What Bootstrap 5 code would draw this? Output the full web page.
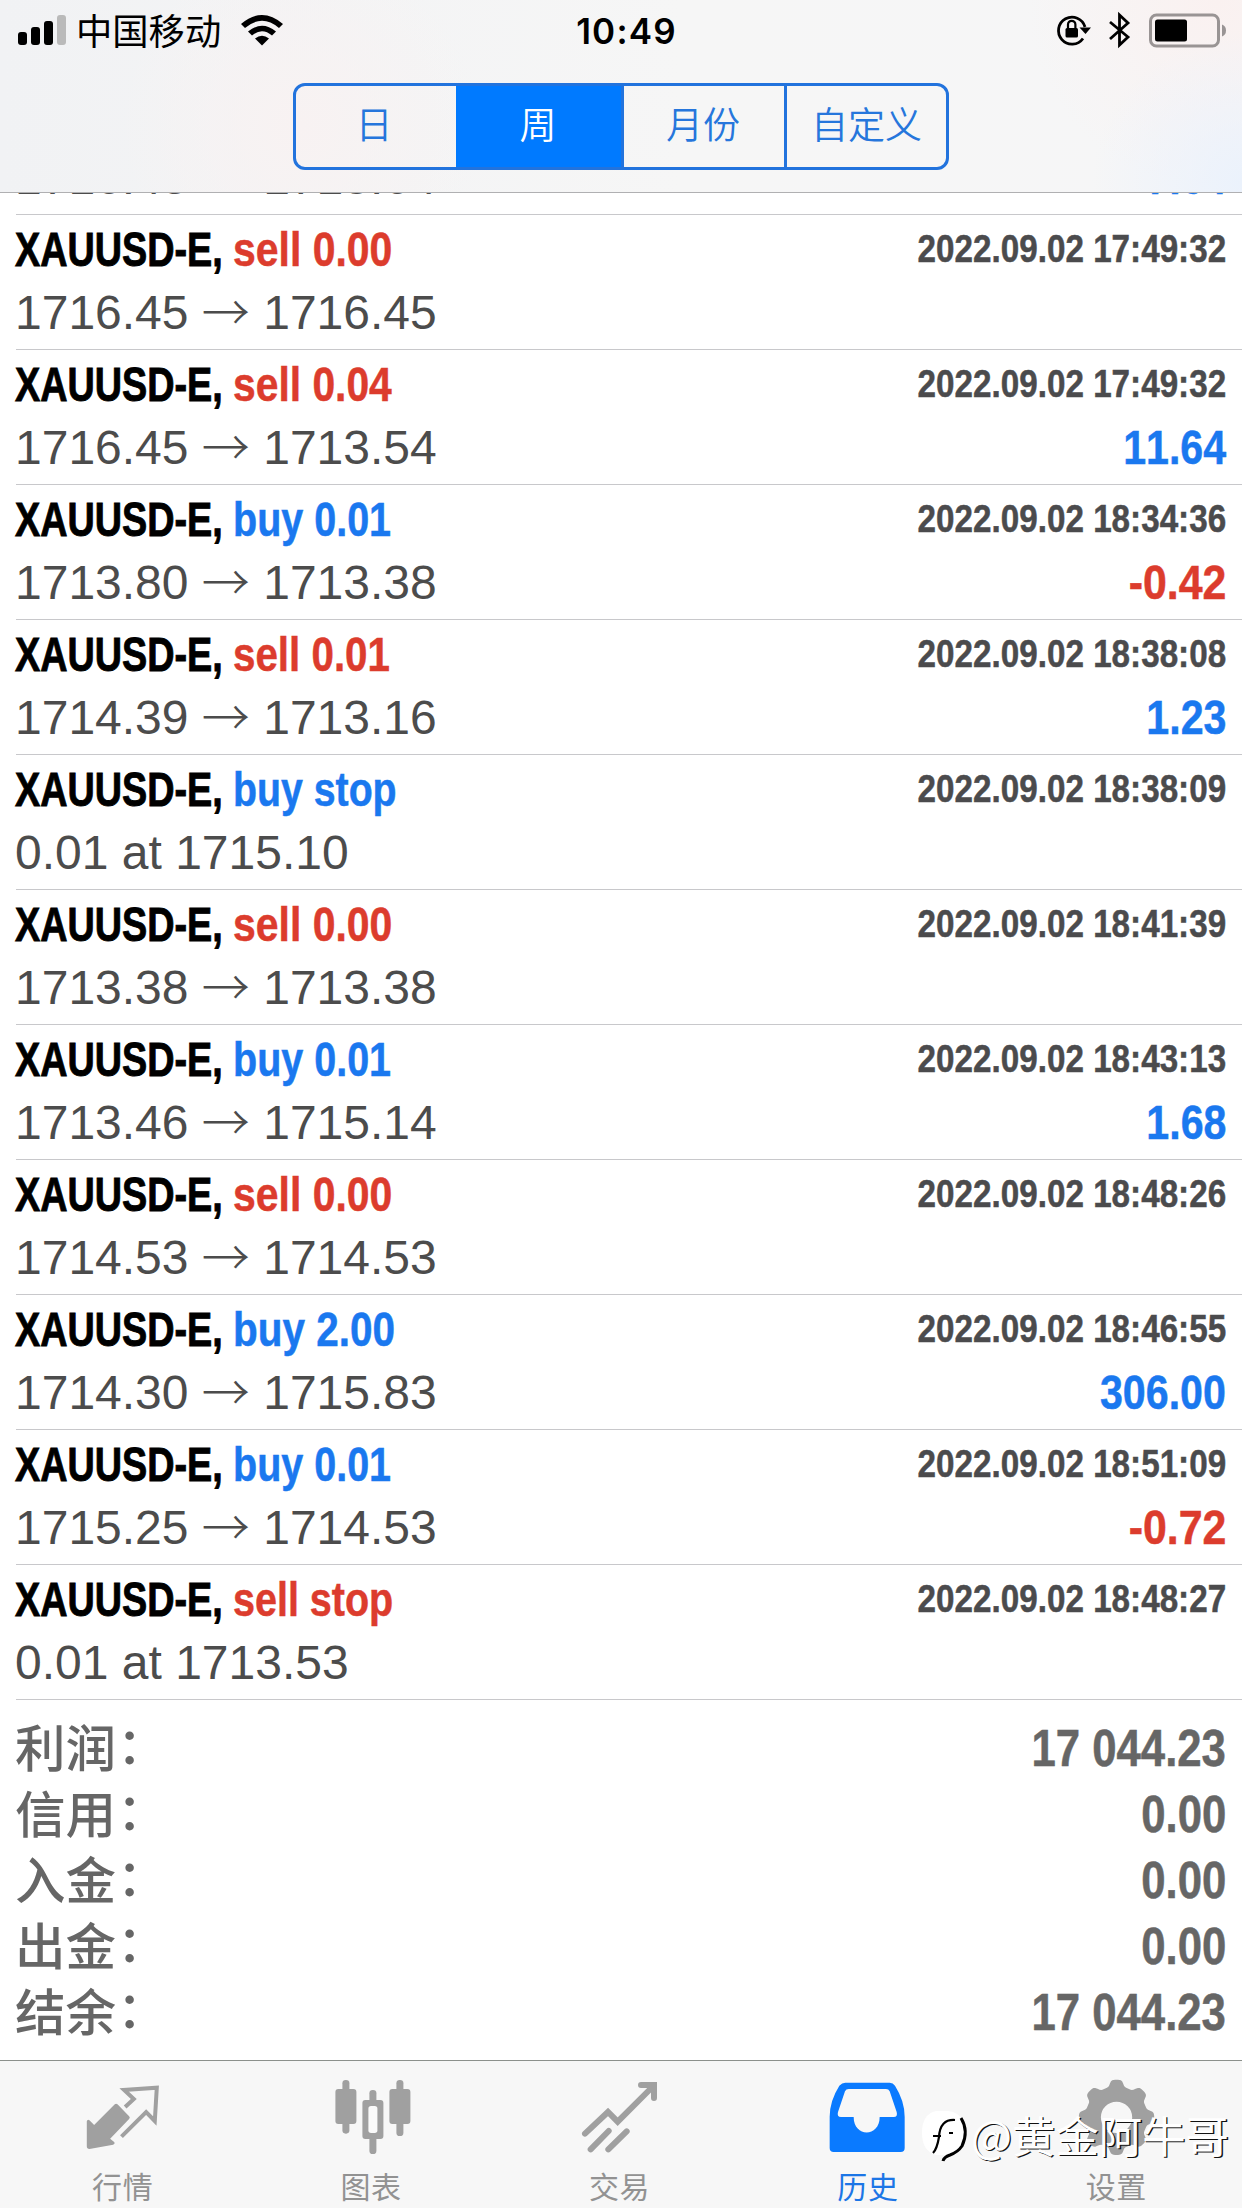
<!DOCTYPE html>
<html lang="zh-CN">
<head>
<meta charset="utf-8">
<meta name="viewport" content="width=device-width, initial-scale=1">
<title>历史</title>
<link href="https://cdn.jsdelivr.net/npm/bootstrap@5.3.0/dist/css/bootstrap.min.css" rel="stylesheet">
<style>
body{width:1242px;height:2208px;overflow:hidden;background:#fff;font-family:"Liberation Sans","Noto Sans CJK SC",sans-serif;font-kerning:none}
.cjk{font-family:"Noto Sans CJK SC",sans-serif}
.top-area{height:193px;flex:none;border-bottom:1px solid #b0b0b2;background:radial-gradient(circle at 100% 95%,#ebf2fc 0,transparent 150px),radial-gradient(circle at 98% 0,#faf1f0 0,transparent 190px),radial-gradient(circle at 300px 125px,#f8f2f2 0,transparent 180px),linear-gradient(90deg,#f1f2f4,#f6f6f6 55%,#f6f6f7)}
.status{height:64px;padding:0 15px 0 18px}
.carrier{font-size:36.3px;line-height:60px;margin:-6px 0 0 8px;color:#000}
.clock{font:600 35px/60px Inter,sans-serif;color:#000;letter-spacing:1.2px;padding:0 0 2px 8px}
.seg{width:656px;height:87px;margin-top:19px;border:3px solid #2273dd;border-radius:12px;overflow:hidden}
.seg .btn{border:0;border-radius:0;padding:0 2px 0 0;width:163px;flex:none;font-size:37px;font-weight:350;line-height:75px;height:81px;padding-bottom:6px;color:#2676dc;border-left:3px solid #2273dd}
.seg .btn:first-child{border-left:0;width:160px;padding-right:4px}
.seg .btn.active{background:#007aff;color:#fff;border-color:#007aff;width:165px;padding-right:4px}
.seg .btn:last-child{width:162px;padding-right:0}
.deals{height:1507px;flex:none;overflow:hidden;justify-content:flex-end}
.deal{height:135px;flex:none;margin-left:16px;border-bottom:1px solid #c8c8cb;padding-right:16px}
.line-a{height:69px}.line-b{height:60px}
.sx{display:inline-block;white-space:nowrap;transform-origin:0 0;font-weight:700;-webkit-text-stroke:.5px currentColor}
.sx-end{transform-origin:100% 0}
.sym{width:218px;margin-left:-1px;font-size:48px;line-height:69px;color:#000;transform:scaleX(.787);-webkit-text-stroke-width:.9px}
.kind{font-size:48px;line-height:69px}
.stamp{font-size:39px;line-height:67px;color:#4b4b4d;transform:scaleX(.852)}
.price{font-size:48px;line-height:58px;color:#4c4c4c;white-space:pre;margin-left:-1px}
.arrow{font-family:"Noto Sans CJK SC",sans-serif;font-weight:300;line-height:0;vertical-align:-1px}
.gain{font-size:48px;line-height:57px}
.up{color:#1a78ef}.down{color:#dc3c2d}
.sums{height:360px;flex:none;padding:15px 16px 0 15px;color:#666}
.sum-line{height:66px}
.sum-name{font-size:50.5px;line-height:60px;font-weight:500}
.sum-colon{position:relative;top:-3px;left:1px}
.sum-val{font-size:51px;line-height:67px;transform:scaleX(.857)}
.tabs{height:148px;background:#f7f7f7;border-top:1px solid #8c908c;padding-top:18px;color:#929292}
.tabs svg{width:76px;height:76px;overflow:visible}
.tab-name{font-size:30px;line-height:36px;margin:12px 3px 0 0;letter-spacing:.6px}
.tab-on{color:#1c76e6}
.stamp-mark{left:922px;top:2103px;color:#fff}
.mark-text{font-size:43.4px;line-height:62px;margin-left:3px;white-space:nowrap;text-shadow:1.3px 1.3px 0 #111}
</style>
</head>
<body class="d-flex flex-column position-relative">
<header class="top-area">
  <div class="status row g-0 align-items-center">
    <div class="col d-flex align-items-center">
      <svg width="50" height="32" viewBox="0 0 50 32" class="mb-1"><rect x="0" y="18" width="9" height="13" rx="3"/><rect x="13" y="13" width="9" height="18" rx="3"/><rect x="26" y="7" width="9" height="24" rx="3"/><rect x="39" y="1" width="9" height="30" rx="3" fill="#bababa"/></svg>
      <span class="carrier cjk">中国移动</span>
      <svg class="ms-3 ps-1 mb-1" width="46" height="32" viewBox="0 0 42 31"><path d="M0 9.500Q21-8.500 42 9.500L38 13.500Q21-1 4 13.500Z"/><path d="M7 17Q21 5.500 35 17L31 21Q21 12.500 11 21Z"/><path d="M14 24Q21 18.500 28 24L21 31Z"/></svg>
    </div>
    <div class="col-auto clock">10:49</div>
    <div class="col d-flex align-items-center justify-content-end">
      <svg class="mb-1" width="34" height="34" viewBox="0 0 34 34" overflow="visible"><path d="M26 25.500A13.500 13.500 0 1 1 28 14" fill="none" stroke="#000" stroke-width="2.800"/><path d="M22.500 14.500H34L28.500 21Z"/><rect x="8.500" y="15" width="12.500" height="9.500" rx="1.500"/><path d="M11 16V11.500a3.700 3.700 0 0 1 7.400 0V16" fill="none" stroke="#000" stroke-width="2.200"/></svg>
      <svg class="ms-3 mb-1" width="26" height="38" viewBox="0 0 24 38"><path d="M2 11L20 26L11.500 34V4L20 12L2 28" fill="none" stroke="#000" stroke-width="2.800"/></svg>
      <svg class="ms-3 mb-1" width="78" height="36" viewBox="0 0 78 36"><rect x="1.500" y="3" width="68" height="31" rx="6" fill="none" stroke="#999494" stroke-width="3"/><rect x="6" y="7.500" width="32" height="22" rx="2.500"/><path d="M73 12.500Q77 14 77 18.500T73 24.500Z" fill="#999494"/></svg>
    </div>
  </div>
  <div class="seg d-flex mx-auto cjk" role="group">
    <button class="btn">日</button><button class="btn active">周</button><button class="btn">月份</button><button class="btn">自定义</button>
  </div>
</header>
<main class="deals d-flex flex-column" id="deals"></main>
<section class="sums" id="sums"></section>
<nav class="tabs row g-0 text-center cjk">
  <div class="col"><svg viewBox="258.600 117 228 228"><path fill="#a0a0a0" d="M345 193q4-4 8 0l35 36q4 4 0 8l-57 59 12 10q4 5-3 8l-71 13q-8 0-8-8v-75q2-8 8-3l14 14Z"/><path d="M376 201l26-24-29-27 98-7-6 100-26-27-74 74" fill="none" stroke="#a0a0a0" stroke-width="12"/></svg><div class="tab-name">行情</div></div>
  <div class="col"><svg viewBox="1003.800 117 228 228" fill="#a0a0a0"><rect x="1026" y="120" width="21" height="161" rx="10"/><rect x="1005" y="147" width="63" height="105" rx="9"/><rect x="1188" y="120" width="21" height="168" rx="10"/><rect x="1167" y="147" width="63" height="105" rx="9"/><rect x="1107" y="150" width="21" height="192" rx="10"/><rect x="1086" y="180" width="63" height="117" rx="9"/><rect x="1104" y="198" width="27" height="81" rx="8" fill="#fafafa"/></svg><div class="tab-name">图表</div></div>
  <div class="col"><svg viewBox="429 117 228 228" fill="none" stroke="#a0a0a0" stroke-width="18" stroke-linecap="round"><path d="M435 281L504 216L533 245L640 138"/><path d="M603 135H642V174" stroke-linejoin="miter"/><path d="M452 328L506 273M505 328L560 274"/></svg><div class="tab-name">交易</div></div>
  <div class="col tab-on"><svg viewBox="94 117 228 228"><path fill="#0a7aff" fill-rule="evenodd" d="M137 128H270Q280 128 286 137Q315 183 315 230V324Q315 336 303 336H102Q90 336 90 324V230Q90 183 119 137Q127 128 137 128ZM147 147Q139 147 136 154L115 216Q111 231 124 231H162C162 293 240 293 240 231H282Q295 231 291 216L270 154Q267 147 259 147Z"/></svg><div class="tab-name">历史</div></div>
  <div class="col"><svg viewBox="839.400 117 228 228"><path id="gear" fill="#a0a0a0" fill-rule="evenodd"/></svg><div class="tab-name">设置</div></div>
</nav>
<div class="stamp-mark position-absolute d-flex align-items-center cjk">
  <svg class="mt-1" width="46" height="54" viewBox="0 0 46 54" overflow="visible"><path d="M14 2H26Q44 4 43 26Q43 42 24 46H14Q0 42 0 24Q0 5 14 2Z" fill="#fff"/><path d="M11 44Q15 40 17 28Q18 10 33 11M11 27H19M27 24H31" fill="none" stroke="#000" stroke-width="2.200"/><path d="M39 9Q47 22 40 37Q36 43 28 46Q22 48 21 52" fill="none" stroke="#000" stroke-width="3"/></svg>
  <span class="mark-text">@黄金阿牛哥</span>
</div>
<script>
const deals=[
["sell","0.04","1716.45","1713.64","2022.09.02 17:49:32","7.64"],
["sell","0.00","1716.45","1716.45","2022.09.02 17:49:32",""],
["sell","0.04","1716.45","1713.54","2022.09.02 17:49:32","11.64"],
["buy","0.01","1713.80","1713.38","2022.09.02 18:34:36","-0.42"],
["sell","0.01","1714.39","1713.16","2022.09.02 18:38:08","1.23"],
["buy","stop","0.01 at 1715.10","","2022.09.02 18:38:09",""],
["sell","0.00","1713.38","1713.38","2022.09.02 18:41:39",""],
["buy","0.01","1713.46","1715.14","2022.09.02 18:43:13","1.68"],
["sell","0.00","1714.53","1714.53","2022.09.02 18:48:26",""],
["buy","2.00","1714.30","1715.83","2022.09.02 18:46:55","306.00"],
["buy","0.01","1715.25","1714.53","2022.09.02 18:51:09","-0.72"],
["sell","stop","0.01 at 1713.53","","2022.09.02 18:48:27",""]];
// Horizontal condensing of the bold face, per label
const squeeze={"sell 0.00":.853,"sell 0.04":.85,"sell 0.01":.84,"buy 0.01":.823,"buy 2.00":.844,"buy stop":.818,"sell stop":.823};
document.getElementById("deals").innerHTML=deals.map(([side,lot,from,to,time,gain])=>`
<div class="deal"><div class="line-a d-flex justify-content-between"><div class="d-flex"><span class="sx sym">XAUUSD-E,</span><span class="sx kind ${side=="buy"?"up":"down"}" style="transform:scaleX(${squeeze[side+" "+lot]})">${side} ${lot}</span></div><span class="sx sx-end stamp">${time}</span></div>
<div class="line-b d-flex justify-content-between"><span class="price">${to?`${from} <span class="arrow">→</span> ${to}`:from}</span><span class="sx sx-end gain ${gain[0]=="-"?"down":"up"}" style="transform:scaleX(${gain[0]=="-"?.893:.857})">${gain}</span></div></div>`).join("");
document.getElementById("sums").innerHTML=[["利润","17 044.23"],["信用","0.00"],["入金","0.00"],["出金","0.00"],["结余","17 044.23"]].map(([n,v])=>`<div class="sum-line d-flex justify-content-between"><span class="sum-name cjk">${n}<span class="sum-colon">：</span></span><span class="sx sx-end sum-val">${v}</span></div>`).join("");
// Gear outline: eight rounded teeth around a circular hole
let d="";
for(let i=0;i<=160;i++){const a=i*Math.PI/80,c=Math.cos(8*a),r=103+10*Math.tanh(2.2*c)/Math.tanh(2.2);d+=(i?"L":"M")+(949+r*Math.cos(a)).toFixed(1)+" "+(232+r*Math.sin(a)).toFixed(1)}
document.getElementById("gear").setAttribute("d",d+"ZM902 232a47 47 0 1 0 94 0a47 47 0 1 0-94 0Z");
</script>
<script src="https://cdn.jsdelivr.net/npm/bootstrap@5.3.0/dist/js/bootstrap.bundle.min.js"></script>
</body>
</html>
